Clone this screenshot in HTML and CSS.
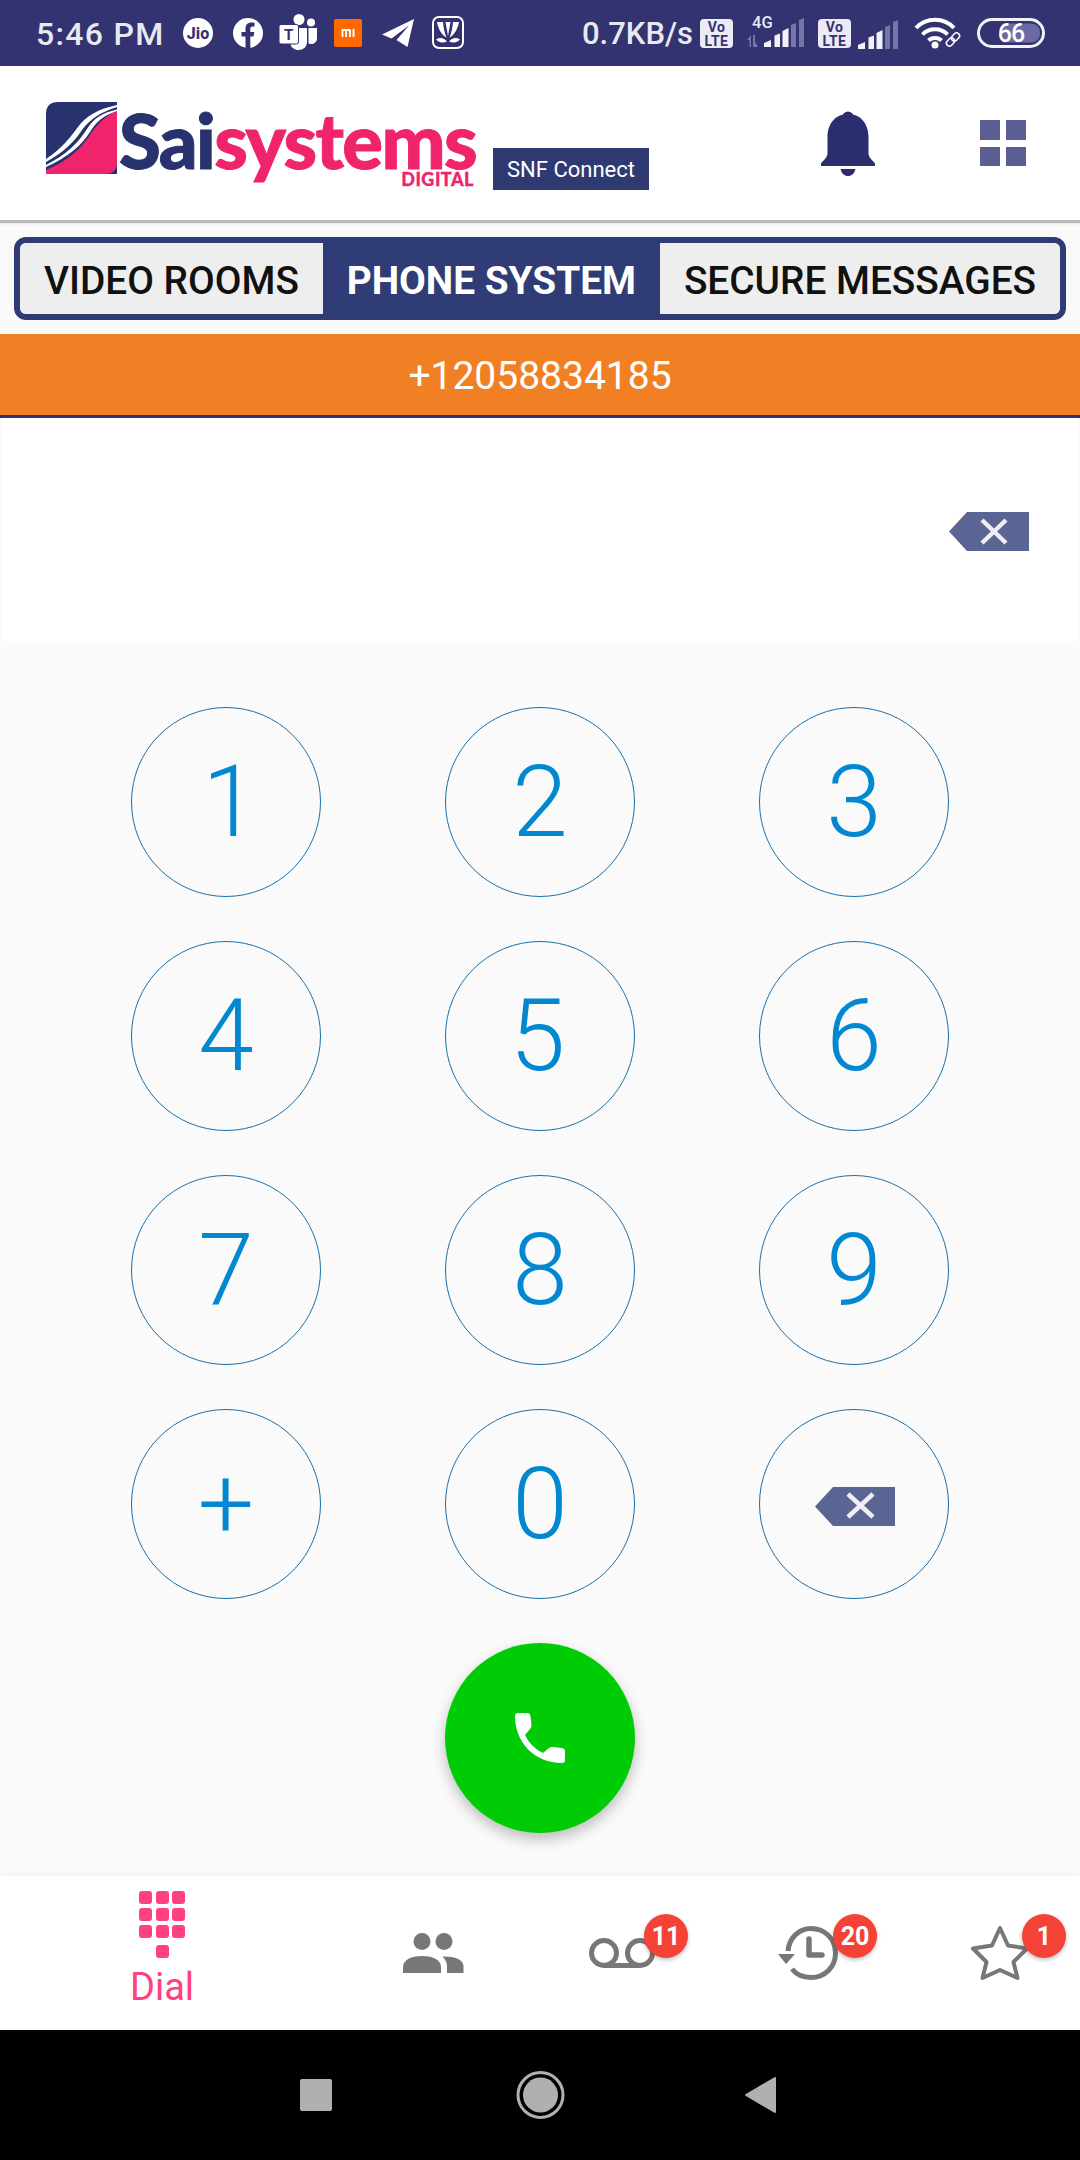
FILE: index.html
```html
<!DOCTYPE html>
<html lang="en">
<head>
<meta charset="utf-8">
<title>SNF Connect</title>
<link rel="stylesheet" href="styles.css">
</head>
<body>
<div class="page">
  <div class="status">
    <span class="time">5:46 PM</span>
    <svg class="si jio" viewBox="0 0 30 30"><circle cx="15" cy="15" r="15" fill="#fff"/><text x="15" y="21" text-anchor="middle" class="jio-t">Jio</text></svg>
    <svg class="si fb" viewBox="0 0 30 30"><circle cx="15" cy="15" r="15" fill="#fff"/><path fill="#323370" d="M12.5 30V18.500H8.500V14H12.500V10.500C12.500 6.500 15 4.500 18.500 4.500C20 4.500 21.500 4.800 21.500 4.800V8.500H19.700C17.800 8.500 17.300 9.500 17.300 10.800V14H21.300L20.600 18.500H17.300V30Z"/></svg>
    <svg class="si teams" viewBox="0 0 38 36"><circle cx="20" cy="5.500" r="5.500" fill="#fff"/><circle cx="32" cy="8.500" r="4" fill="#fff"/><path fill="#fff" d="M29.500 14H38V24C38 28 35 30 32 30C31 30 30 29.800 29.500 29.600Z"/><path fill="#fff" d="M14 14H28V28C28 33 24 36 19.500 36C15.500 36 12 33.500 11.500 30H14Z"/><rect x="0" y="10.500" width="19.500" height="19.500" rx="2" fill="#fff" stroke="#323370"/><text x="9.700" y="26" text-anchor="middle" class="teams-t">T</text></svg>
    <svg class="si mi" viewBox="0 0 28 28"><rect width="28" height="28" rx="2" fill="#ff6900"/><path fill="#fff" d="M7.500 10H15.500Q17 10 17 11.500V18H15V12H13V18H11.200V12H9.400V18H7.500ZM18.500 10H20.500V18H18.500Z"/></svg>
    <svg class="si tg" viewBox="0 0 32 28"><path fill="#fff" d="M32 0L0 15.500L9.500 19.500L27 6.500L14.500 21L25.500 28Z"/></svg>
    <svg class="si saavn" viewBox="0 0 32 33"><rect x="1" y="1" width="30" height="31" rx="6" fill="none" stroke="#fff" stroke-width="2"/><path fill="#fff" d="M5 6H11C11.500 12 12.500 17 14.500 21.500C9 18.500 6 12 5 6Z"/><path fill="#fff" d="M13.500 6H18.500L16 20Z"/><path fill="#fff" d="M21 6H27C26 12 23 18.500 17.500 21.500C19.500 17 20.500 12 21 6Z"/><path fill="#fff" d="M4 23.500C8 21 12 22 15 25.500C11 27 7 27 4 23.500Z"/><path fill="#fff" d="M28 23.500C24 21 20 22 17 25.500C21 27 25 27 28 23.500Z"/></svg>
    <span class="speed">0.7KB/s</span>
    <svg class="si volte" viewBox="0 0 33 29"><rect width="33" height="29" rx="4" fill="#eceaf4"/><text x="16.500" y="13" text-anchor="middle" class="volte-t">Vo</text><text x="16.500" y="26.500" text-anchor="middle" class="volte-t">LTE</text></svg>
    <svg class="si sig4g" viewBox="0 0 57 32"><text x="5" y="11.500" class="g4">4G</text><path class="dim" d="M0 24L4 19V31H2.500V24ZM6 19H8V26L11 31H6Z"/><path class="lit" d="M17 31V27L24 24V31ZM27.500 31V19.500L33 17.500V31ZM35.500 31V15L41.500 12V31Z"/><path class="dim" d="M44 31V9L49 7V31ZM52 31V4L57 2V31Z"/></svg>
    <svg class="si volte v2" viewBox="0 0 33 29"><rect width="33" height="29" rx="4" fill="#eceaf4"/><text x="16.500" y="13" text-anchor="middle" class="volte-t">Vo</text><text x="16.500" y="26.500" text-anchor="middle" class="volte-t">LTE</text></svg>
    <svg class="si sig" viewBox="0 0 40 30"><path class="lit" d="M0 29V25L7 22V29ZM10.500 29V17.500L16 15.500V29ZM18.500 29V13L24.500 10V29Z"/><path class="dim" d="M27 29V7L32 5V29ZM35 29V2L40 0V29Z"/></svg>
    <svg class="si wifi" viewBox="0 0 47 31"><path class="wave" d="M2 10C12 -1 30 -1 40 10"/><path class="wave" d="M8.500 16.500C15 9.500 27 9.500 33.500 16.500"/><path class="wave" d="M14.500 22.500C18 19 24 19 27.500 22.500"/><circle cx="21" cy="27" r="3.500" fill="#fff"/><g class="chain"><rect x="32" y="21" width="9" height="6" rx="3" transform="rotate(-45 36.500 24)"/><rect x="37" y="16" width="9" height="6" rx="3" transform="rotate(-45 41.500 19)"/></g></svg>
    <svg class="si batt" viewBox="0 0 68 30"><rect x="1.500" y="1.500" width="65" height="27" rx="13.500" fill="none" stroke="#f2f1f7" stroke-width="3"/><path fill="#6a6ba3" d="M26 5.500H52Q63 5.500 63 15Q63 24.500 52 24.500H26Z"/><text x="34" y="24" text-anchor="middle" class="batt-t">66</text></svg>
  </div>

  <header class="head">
    <div class="logo">
      <svg class="mark" viewBox="0 0 71 72"><path fill="#28326f" d="M12 0H71V72H0V12Q0 0 12 0Z"/><path fill="#f0246c" d="M71 9C58 14 50 24 44 33C34 48 20 60 0 68V72H59Q71 72 71 60Z"/><path fill="#fff" d="M71 3C52 7 40 14 32 25C24 36 16 46 0 57V60C18 50 28 40 36 28C44 17 55 10 71 5Z"/><path fill="#fff" d="M71 7.500C56 11 47 17 41 27C33 40 20 53 0 63V65C22 55 36 43 44 30C50 20 58 13 71 9Z"/></svg>
      <div class="wordmark"><span class="sai">Sai</span><span class="systems">systems</span><span class="digital">DIGITAL</span></div>
    </div>
    <span class="tag">SNF Connect</span>
    <svg class="bell" viewBox="0 0 54 65"><circle cx="27" cy="6" r="5.500"/><path d="M27 3C14 3 6.500 13 6.500 26V42C6.500 47 2.500 49 0 52.500V55H54V52.500C51.500 49 47.500 47 47.500 42V26C47.500 13 40 3 27 3Z"/><path d="M19.500 58H34.500C33.500 62.500 30.500 65 27 65C23.500 65 20.500 62.500 19.500 58Z"/></svg>
    <div class="apps"><i></i><i></i><i></i><i></i></div>
  </header>

  <nav class="tabs">
    <span class="tab">VIDEO ROOMS</span>
    <span class="tab active">PHONE SYSTEM</span>
    <span class="tab">SECURE MESSAGES</span>
  </nav>

  <div class="caller">+12058834185</div>

  <div class="display">
    <svg class="bksp" viewBox="0 0 80 39"><path class="bk" d="M18 0H80V39H18L0 19.500Z"/><path class="bx" d="M33 8L57 31M57 8L33 31"/></svg>
  </div>

  <main class="keypad">
    <button class="key k1">1</button>
    <button class="key">2</button>
    <button class="key">3</button>
    <button class="key">4</button>
    <button class="key k5">5</button>
    <button class="key">6</button>
    <button class="key">7</button>
    <button class="key">8</button>
    <button class="key">9</button>
    <button class="key">+</button>
    <button class="key">0</button>
    <button class="key"><svg class="bksp-key" viewBox="0 0 80 39"><path class="bk" d="M18 0H80V39H18L0 19.500Z"/><path class="bx" d="M33 7L58 30M58 7L33 30"/></svg></button>
    <button class="call"><svg class="phone" viewBox="0 0 50 50"><path fill="#fff" d="M3 0H12Q15 0 15.500 3L16.500 12Q16.700 14 15 16L10 22C14 30 20 36 28 40L34 35Q36 33.500 38 34L47 35Q50 35.500 50 38V47Q50 50 47 50C20 50 0 30 0 3Q0 0 3 0Z"/></svg></button>
  </main>

  <nav class="bottom">
    <div class="item i-dial">
      <div class="dialpad"><i></i><i></i><i></i><i></i><i></i><i></i><i></i><i></i><i></i><i class="last"></i></div>
      <span class="dial-label">Dial</span>
    </div>
    <div class="item i-people">
      <svg class="people" viewBox="0 0 61 40"><circle cx="19" cy="8.500" r="8.500"/><circle cx="41" cy="8.500" r="8.500"/><path d="M0 40V34C0 26 10 23 19 23C28 23 38 26 38 34V40Z"/><path d="M44 40V33C44 29 42 26 39.500 23.500C50 23 60.500 26 60.500 33V40Z"/></svg>
    </div>
    <div class="item i-vm">
      <div class="icon-wrap">
        <svg class="vm" viewBox="0 0 66 30"><circle cx="15" cy="15" r="12.500"/><circle cx="51" cy="15" r="12.500"/><path d="M15 27.500H51"/></svg>
        <span class="badge b-vm">11</span>
      </div>
    </div>
    <div class="item i-hist">
      <div class="icon-wrap">
        <svg class="hist" viewBox="0 0 60 54"><path class="ln" d="M10 25C11 12 21 2.500 33 2.500C47 2.500 57.500 13 57.500 27C57.500 41 47 51.500 33 51.500C25 51.500 18 48 14 43"/><path class="tri" d="M0 28H17L8 38Z"/><path class="ln rnd" d="M31 13V29H44"/></svg>
        <span class="badge b-hist">20</span>
      </div>
    </div>
    <div class="item i-star">
      <div class="icon-wrap">
        <svg class="star" viewBox="0 0 58 54"><path d="M29 2L37 19.500L56 22.500L42.500 36L46.500 52L29 44L11.500 52L15.500 36L2 22.500L21 19.500Z"/></svg>
        <span class="badge b-star">1</span>
      </div>
    </div>
  </nav>

  <footer class="sysnav">
    <span class="recent"></span>
    <svg class="home" viewBox="0 0 49 48"><circle cx="24.500" cy="24" r="22.500" fill="none" stroke="#b0b0b0" stroke-width="3"/><circle cx="24.500" cy="24" r="17.500" fill="#b0b0b0"/></svg>
    <svg class="back" viewBox="0 0 31 36"><path fill="#b0b0b0" stroke="#b0b0b0" stroke-width="2" stroke-linejoin="round" d="M1 18L30 1V35Z"/></svg>
  </footer>
</div>
</body>
</html>
```
FILE: styles.css
```css
* { box-sizing: border-box; }
html, body { margin: 0; padding: 0; }
body { font-family: Roboto, "Liberation Sans", sans-serif; background: #fafafa; }
.page { width: 1080px; height: 2160px; display: flex; flex-direction: column; overflow: hidden; background: #fafafa; }

/* status bar */
.status { height: 66px; flex: none; background: #323370; display: flex; align-items: center; padding-left: 36px; color: #e9e9f2; }
.time { font-size: 32px; font-weight: 500; letter-spacing: 1.300px; width: 147px; white-space: nowrap; padding-top: 1px; }
.speed { font-size: 31px; font-weight: 500; margin-left: 118px; width: 118px; white-space: nowrap; padding-top: 1px; }
.si { display: block; flex: none; overflow: visible; }
.jio { width: 30px; height: 30px; }
.jio-t { font: 800 16px Roboto, sans-serif; fill: #323370; }
.fb { width: 30px; height: 30px; margin-left: 20px; }
.teams { width: 38px; height: 36px; margin-left: 16px; margin-top: -2px; }
.teams-t { font: 700 15px Roboto, sans-serif; fill: #323370; }
.mi { width: 28px; height: 28px; margin-left: 17px; }
.tg { width: 32px; height: 28px; margin-left: 20px; }
.saavn { width: 32px; height: 33px; margin-left: 18px; margin-top: -1px; }
.volte { width: 33px; height: 29px; }
.volte-t { font: 700 14px Roboto, sans-serif; fill: #323370; letter-spacing: 0.400px; }
.sig4g { width: 57px; height: 32px; margin-left: 14px; margin-top: -3px; }
.g4 { font: 500 16.500px Roboto, sans-serif; fill: #eceaf4; }
.lit { fill: #f2f1f7; }
.dim { fill: #7676a6; }
.v2 { margin-left: 14px; }
.sig { width: 40px; height: 30px; margin-left: 7px; margin-top: 3px; }
.wifi { width: 47px; height: 31px; margin-left: 16px; }
.wave { fill: none; stroke: #fff; stroke-width: 4; }
.chain rect { fill: none; stroke: #fff; stroke-width: 1.500; }
.batt { width: 68px; height: 30px; margin-left: 16px; }
.batt-t { font: 500 25px Roboto, sans-serif; fill: #fff; letter-spacing: -1px; }

/* header */
.head { height: 157px; flex: none; background: #fff; border-bottom: 3px solid #bababa; box-shadow: 0 1px 3px rgba(0,0,0,.08); display: flex; align-items: flex-start; padding-right: 54px; }
.logo { position: relative; display: flex; align-items: flex-start; width: 431px; margin-left: 46px; margin-top: 36px; margin-right: 16px; }
.mark { width: 71px; height: 72px; flex: none; }
.wordmark { margin-left: 2px; font-family: Lato, sans-serif; font-weight: 900; font-size: 76px; line-height: 76px; letter-spacing: -1.600px; white-space: nowrap; -webkit-text-stroke: 1px currentColor; }
.sai { color: #28326f; }
.systems { color: #f0246c; }
.digital { position: absolute; right: 3px; top: 68px; font-size: 18px; line-height: 18px; letter-spacing: 0.500px; color: #f0246c; -webkit-text-stroke: 0.300px currentColor; }
.tag { margin-top: 82px; width: 156px; height: 42px; padding-top: 1px; background: #2f3a73; color: #fff; font-size: 22px; display: flex; align-items: center; justify-content: center; }
.bell { width: 54px; height: 65px; margin-top: 45px; margin-left: auto; fill: #2b2d6e; }
.apps { width: 46px; height: 46px; margin-top: 54px; margin-left: 105px; display: grid; grid-template-columns: 20px 20px; gap: 7px 6px; }
.apps i { background: #5b5e92; display: block; }

/* tabs */
.tabs { margin: 14px 14px 14px; height: 83px; flex: none; border: 6px solid #2f3b75; border-radius: 12px; display: flex; background: #eee; overflow: hidden; }
.tab { flex: 1 1 auto; padding: 3px 23px 0; display: flex; align-items: center; justify-content: center; font-size: 38.800px; font-weight: 500; color: #111; white-space: nowrap; background: #eee; }
.tab.active { background: #303c76; color: #fff; font-weight: 700; }

/* caller */
.caller { height: 84px; flex: none; padding-top: 2px; background: #f17f23; border-bottom: 3px solid #2d3470; color: #fff; font-size: 39px; display: flex; align-items: center; justify-content: center; }

/* display */
.display { height: 223px; flex: none; margin: 0 2px; background: #fff; display: flex; align-items: center; justify-content: flex-end; padding-right: 49px; padding-top: 3px; }
.bksp { width: 80px; height: 39px; display: block; }
.bksp-key { width: 80px; height: 39px; display: block; margin-left: 1px; margin-top: 6px; }
.bk { fill: #5a6594; }
.bx { stroke: #eeeef3; stroke-width: 4.500; fill: none; }

/* keypad */
.keypad { flex: 1; display: grid; grid-template-columns: repeat(3, 190px); grid-auto-rows: 190px; gap: 44px 124px; justify-content: center; padding-top: 66px; background: #fafafa; }
.key { width: 190px; height: 190px; padding: 0 0 1px; border: 1px solid #1a6fa8; border-radius: 50%; background: transparent; color: #0288d1; font-family: Roboto, sans-serif; font-weight: 300; font-size: 100px; line-height: 1; display: flex; align-items: center; justify-content: center; }
.k1 { padding-left: 8px; }
.k5 { padding-right: 5px; }
.call { grid-column: 2; width: 190px; height: 190px; padding: 0; border: 0; border-radius: 50%; background: #00cc05; box-shadow: 0 6px 14px rgba(0,0,0,.25); display: flex; align-items: center; justify-content: center; }
.phone { width: 50px; height: 50px; display: block; }

/* bottom nav */
.bottom { height: 154px; flex: none; background: #fff; display: flex; align-items: center; box-shadow: 0 -1px 5px rgba(0,0,0,.05); position: relative; }
.item { display: flex; flex-direction: column; align-items: center; flex: none; }
.i-dial { width: 324px; padding-bottom: 6px; }
.i-people { width: 218px; }
.i-vm { width: 160px; }
.i-hist { width: 212px; }
.i-star { width: 166px; padding-left: 6px; }
.dialpad { width: 46px; display: grid; grid-template-columns: repeat(3, 13px); gap: 3.500px; column-gap: 3.500px; }
.dialpad i { height: 13.300px; background: #ff4081; border-radius: 3px; display: block; }
.dialpad i.last { grid-column: 2; margin-top: 3px; }
.dial-label { margin-top: 7px; font-size: 38px; line-height: 44px; color: #ff4081; }
.people { width: 61px; height: 40px; fill: #777; display: block; }
.icon-wrap { position: relative; display: block; }
.vm { width: 66px; height: 30px; display: block; fill: none; stroke: #777; stroke-width: 5; }
.hist { width: 60px; height: 54px; display: block; }
.ln { fill: none; stroke: #777; stroke-width: 5; }
.rnd { stroke-linecap: round; stroke-linejoin: round; stroke-width: 5.500; }
.tri { fill: #777; }
.star { width: 58px; height: 54px; display: block; fill: none; stroke: #777; stroke-width: 4; stroke-linejoin: round; }
.badge { position: absolute; width: 44px; height: 44px; border-radius: 50%; background: #f44336; color: #fff; font-size: 25px; font-weight: 700; display: flex; align-items: center; justify-content: center; box-shadow: 0 2px 4px rgba(0,0,0,.25); }
.b-vm { left: 55px; top: -24px; }
.b-hist { left: 55px; top: -12px; }
.b-star { left: 51px; top: -12px; }

/* system nav */
.sysnav { height: 130px; flex: none; background: #000; display: flex; align-items: center; padding-left: 300px; }
.recent { width: 32px; height: 32px; border-radius: 2px; background: #b0b0b0; display: block; }
.home { width: 49px; height: 48px; margin-left: 184px; display: block; }
.back { width: 31px; height: 36px; margin-left: 180px; display: block; }
```
